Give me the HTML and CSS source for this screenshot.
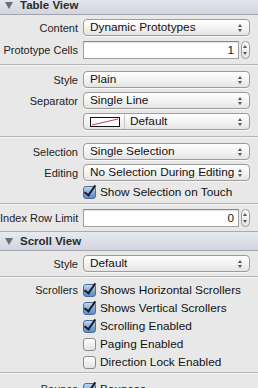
FILE: index.html
```html
<!DOCTYPE html>
<html lang="en">
<head>
  <meta charset="UTF-8" />
  <title>Attributes Inspector</title>
  <link rel="stylesheet" href="styles.css">
</head>
<body>
  <div class="inspector">
    <div class="section-head first"><span class="disclosure"></span>Table View</div>

    <div class="group g1">
      <div class="row"><span class="label">Content</span><div class="popup">Dynamic Prototypes<span class="arrows"></span></div></div>
      <div class="row"><span class="label">Prototype Cells</span><div class="field-wrap"><div class="field">1</div><span class="stepper"></span></div></div>
    </div>

    <div class="group g2">
      <div class="row"><span class="label">Style</span><div class="popup">Plain<span class="arrows"></span></div></div>
      <div class="row"><span class="label">Separator</span><div class="popup">Single Line<span class="arrows"></span></div></div>
      <div class="row"><span class="label"></span><div class="popup color-popup"><span class="swatch"><svg width="28" height="8" viewBox="0 0 28 8"><line x1="1" y1="7" x2="27" y2="1" stroke="#c0405a" stroke-width="1"/></svg></span><span class="divider"></span>Default<span class="arrows"></span></div></div>
    </div>

    <div class="group g3">
      <div class="row"><span class="label">Selection</span><div class="popup">Single Selection<span class="arrows"></span></div></div>
      <div class="row"><span class="label">Editing</span><div class="popup">No Selection During Editing<span class="arrows"></span></div></div>
      <div class="row check-row"><span class="label"></span><label class="check"><span class="box on"></span>Show Selection on Touch</label></div>
    </div>

    <div class="group g4">
      <div class="row"><span class="label">Index Row Limit</span><div class="field-wrap"><div class="field">0</div><span class="stepper"></span></div></div>
    </div>

    <div class="section-head"><span class="disclosure"></span>Scroll View</div>

    <div class="group g5">
      <div class="row"><span class="label">Style</span><div class="popup">Default<span class="arrows"></span></div></div>
    </div>

    <div class="group g6">
      <div class="row check-row"><span class="label">Scrollers</span><label class="check"><span class="box on"></span>Shows Horizontal Scrollers</label></div>
      <div class="row check-row"><span class="label"></span><label class="check"><span class="box on"></span>Shows Vertical Scrollers</label></div>
      <div class="row check-row"><span class="label"></span><label class="check"><span class="box on"></span>Scrolling Enabled</label></div>
      <div class="row check-row"><span class="label"></span><label class="check"><span class="box"></span>Paging Enabled</label></div>
      <div class="row check-row"><span class="label"></span><label class="check"><span class="box"></span>Direction Lock Enabled</label></div>
    </div>

    <div class="group g7">
      <div class="row check-row"><span class="label">Bounce</span><label class="check"><span class="box on"></span>Bounces</label></div>
    </div>
  </div>
</body>
</html>
```

FILE: styles.css
```css
html, body {
  margin: 0;
  padding: 0;
  height: 388px;
  overflow: hidden;
}
body {
  background-color: #e8e8e8;
  color: #1a1a1a;
  font-family: "Liberation Sans", Arial, sans-serif;
  font-size: 11px;
}
.inspector {
  width: 258px;
}
.section-head {
  height: 20px;
  box-sizing: border-box;
  border-top: 1px solid #a9acb6;
  border-bottom: 1px solid #a2a5ae;
  background: linear-gradient(#e8eaf1, #d2d5df);
  font-weight: bold;
  font-size: 11.5px;
  color: #2b2b2b;
  padding-left: 5px;
  display: flex;
  align-items: center;
}
.section-head.first {
  height: 19px;
  margin-top: -4px;
  border-top: none;
}
.disclosure {
  width: 0;
  height: 0;
  border-left: 4px solid transparent;
  border-right: 4px solid transparent;
  border-top: 7px solid #6b6e78;
  margin-right: 7px;
}
.group {
  border-bottom: 1px solid #b4b4b4;
  box-shadow: 0 1px 0 #f6f6f6;
  display: flex;
  flex-direction: column;
}
.g1 { padding: 4px 0 5px; gap: 5px; }
.g2 { padding: 6px 0 6px; gap: 4px; }
.g3 { padding: 6px 0 5px; gap: 4px; }
.g4 { padding: 5px 0 4px; border-bottom: none; box-shadow: none; }
.g5 { padding: 4px 0 4px; }
.g6 { padding: 6px 0 4px; gap: 5px; }
.g7 { padding: 9px 0 0; border-bottom: none; box-shadow: none; }
.row {
  display: grid;
  grid-template-columns: 78px 167px;
  column-gap: 5px;
  align-items: center;
}
.label {
  text-align: right;
  color: #222;
  white-space: nowrap;
}
.popup {
  position: relative;
  height: 17px;
  box-sizing: border-box;
  border: 1px solid #9c9c9c;
  border-radius: 4px;
  background: linear-gradient(#ffffff, #f1f1f1 60%, #e4e4e4);
  box-shadow: 0 1px 0 rgba(255,255,255,0.7);
  padding-left: 6px;
  line-height: 15px;
  font-size: 11.8px;
  color: #111;
  white-space: nowrap;
  display: flex;
  align-items: center;
}
.arrows {
  position: absolute;
  right: 6px;
  top: 4px;
  width: 5px;
  height: 8px;
}
.arrows::before, .arrows::after {
  content: "";
  position: absolute;
  left: 0;
  border-left: 2.5px solid transparent;
  border-right: 2.5px solid transparent;
}
.arrows::before {
  top: 0;
  border-bottom: 3px solid #555;
}
.arrows::after {
  bottom: 0;
  border-top: 3px solid #555;
}
.swatch {
  display: flex;
  width: 28px;
  height: 8px;
  border: 1px solid #111;
  background: #fff;
}
.divider {
  width: 1px;
  height: 15px;
  background: #c8c8c8;
  margin: 0 5px 0 4px;
}
.field-wrap {
  display: flex;
  align-items: center;
  gap: 2px;
}
.field {
  flex: 1;
  height: 18px;
  box-sizing: border-box;
  border: 1px solid #a0a0a0;
  border-top-color: #8a8a8a;
  background: #fff;
  box-shadow: inset 0 1px 1px rgba(0,0,0,0.12);
  text-align: right;
  padding-right: 4px;
  line-height: 17px;
  font-size: 11.8px;
}
.stepper {
  position: relative;
  width: 9px;
  height: 18px;
  box-sizing: border-box;
  border: 1px solid #9c9c9c;
  border-radius: 5px;
  background: linear-gradient(#fdfdfd, #e6e6e6);
}
.stepper::before, .stepper::after {
  content: "";
  position: absolute;
  left: 1px;
  border-left: 2.5px solid transparent;
  border-right: 2.5px solid transparent;
}
.stepper::before {
  top: 3px;
  border-bottom: 3px solid #555;
}
.stepper::after {
  bottom: 3px;
  border-top: 3px solid #555;
}
.check-row {
  height: 13px;
}
.check {
  display: flex;
  align-items: center;
  white-space: nowrap;
  font-size: 11.8px;
  color: #111;
}
.box {
  position: relative;
  width: 13px;
  height: 13px;
  box-sizing: border-box;
  border: 1px solid #8d8d8d;
  border-radius: 3px;
  background: linear-gradient(#ffffff, #e2e2e2);
  margin-right: 4px;
  flex: none;
}
.box.on {
  border-color: #4b6d9c;
  background: linear-gradient(#c4d9f2, #7ea6d9 55%, #5d8cc9);
}
.box.on::after {
  content: "";
  position: absolute;
  left: 3px;
  top: -4px;
  width: 4px;
  height: 11px;
  border-right: 2px solid #1c1c1c;
  border-bottom: 2px solid #1c1c1c;
  transform: rotate(35deg);
}
```
